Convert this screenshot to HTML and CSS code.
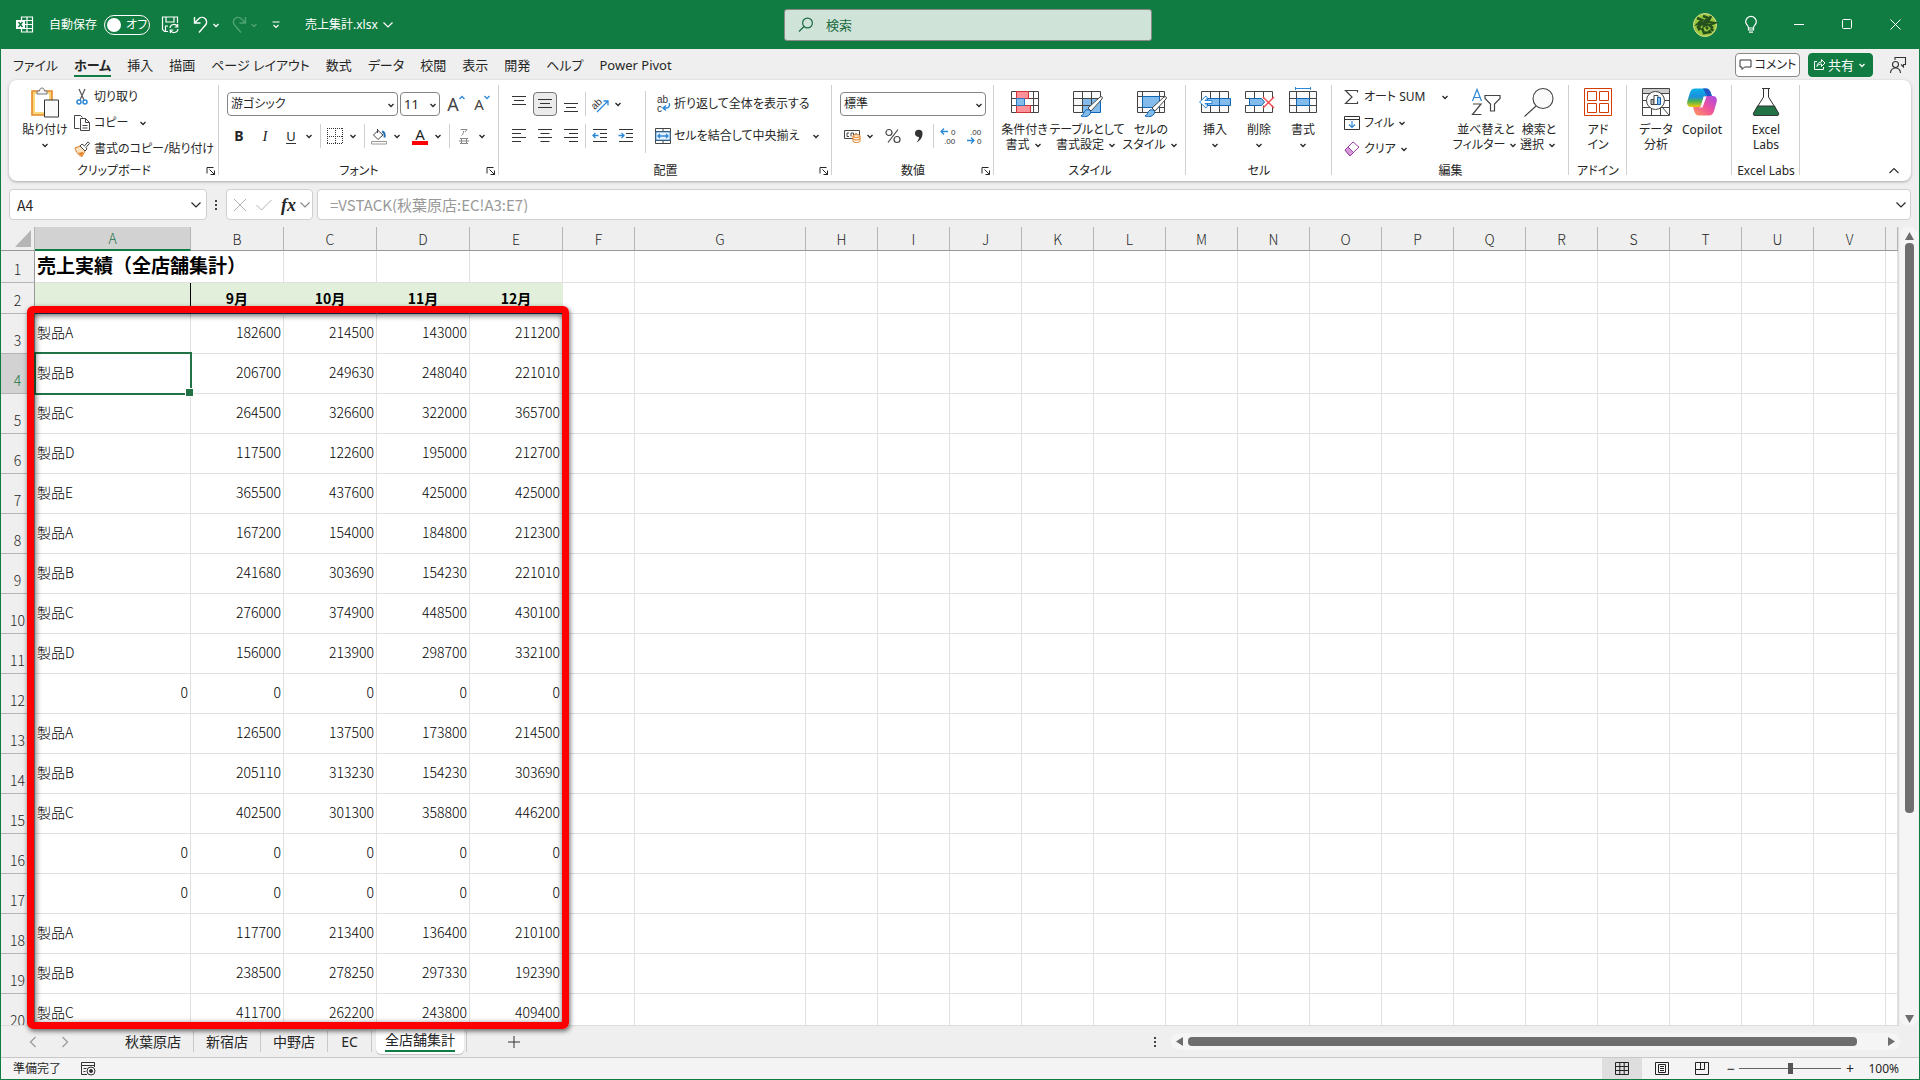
FILE: index.html
```
<!DOCTYPE html>
<html lang="ja">
<head>
    <meta charset="UTF-8">
    <meta name="viewport" content="width=device-width, initial-scale=1.0">
    <title>売上集計.xlsx</title>
    <link rel="stylesheet" href="styles.css">
</head>
<body>
    <svg class="defs" aria-hidden="true">
        <symbol id="chev" viewBox="0 0 12 12"><path d="M3.5 5l2.5 2.5L8.5 5" fill="none" stroke="currentColor" stroke-width="1.3"/></symbol>
        <symbol id="chev-big" viewBox="0 0 12 12"><path d="M1.5 3.5L6 8l4.5-4.5" fill="none" stroke="currentColor" stroke-width="1.2"/></symbol>
        <symbol id="launcher" viewBox="0 0 10 10"><path d="M1 7.5V1.5h6.5M3.5 3.5l5 5M8.5 4.5v4h-4" fill="none" stroke="currentColor"/></symbol>
    </svg>

    <header class="titlebar">
        <div class="title-left">
            <svg class="logo" width="17" height="17" viewBox="0 0 17 17"><path d="M5.5 1h11v15h-11zM5.5 4.5h11M5.5 8.5h11M5.5 12.5h11M11 1v15" fill="none" stroke="#fff" stroke-width="1.2"/><path d="M0 4h9v9H0z" fill="#fff"/><path d="M2.5 6l4 5M6.5 6l-4 5" stroke="#107c41" stroke-width="1.4"/></svg>
            <label class="autosave-label" for="autosave">自動保存</label>
            <span class="switch"><input type="checkbox" id="autosave"><span class="switch-text">オフ</span></span>
            <button class="tbtn save" aria-label="保存"><svg width="17" height="17" viewBox="0 0 17 17" fill="none" stroke="#fff" stroke-width="1.2"><path d="M6 15.5H2.5l-2-2V1h15v6M4 1v5h8V1M3.5 15v-5H6"/><path d="M8 12a4 4 0 0 1 7.5-1.5M15.7 8v3h-3M16 13a4 4 0 0 1-7.5 1.5M8.3 17v-3h3"/></svg></button>
            <button class="tbtn" aria-label="元に戻す"><svg width="16" height="18" viewBox="0 0 16 18" fill="none" stroke="#fff" stroke-width="1.4"><path d="M1.5 1v6h6M1.5 7l4-4a4.5 4.5 0 0 1 7 6L6 16.5"/></svg></button>
            <svg class="chev white"><use href="#chev"/></svg>
            <button class="tbtn redo" aria-label="やり直し"><svg width="16" height="18" viewBox="0 0 16 18" fill="none" stroke="#4fa274" stroke-width="1.4"><path d="M14.5 1v6h-6M14.5 7l-4-4a4.5 4.5 0 0 0-7 6L10 16.5"/></svg></button>
            <svg class="chev dim"><use href="#chev"/></svg>
            <button class="tbtn custom" aria-label="カスタマイズ"><svg width="10" height="10" viewBox="0 0 10 10" fill="none" stroke="#fff" stroke-width="1.2"><path d="M1.5 2h7M2.5 5L5 7.5 7.5 5"/></svg></button>
            <button class="filename">売上集計.xlsx<svg class="chev-big"><use href="#chev-big"/></svg></button>
        </div>
        <div class="search">
            <svg width="16" height="16" viewBox="0 0 16 16" fill="none" stroke="#1c6b41" stroke-width="1.2"><circle cx="9.5" cy="6" r="4.9"/><path d="M6 9.5l-5 5"/></svg>
            <input type="text" placeholder="検索" aria-label="検索">
        </div>
        <div class="title-right">
            <svg width="24" height="24" viewBox="0 0 24 24"><circle cx="12" cy="12" r="11.5" fill="#9bc93d"/><circle cx="12" cy="12" r="11.5" fill="none" stroke="#d9dc8e"/><path d="M4 5l5 2-4 4 5-1-6 5M10 3l5 2-4 4 4-1M18 3l-3 6 6 1-5 2 4 3M12 8l-1 5 4-2M5 17l3-2M9 15l2 5 6-1-1-2M13 14l2 2M18 15l2 3" fill="none" stroke="#24501d" stroke-width="2.6"/></svg>
            <button class="winbtn" aria-label="ヒント"><svg width="12" height="17" viewBox="0 0 12 17" fill="none" stroke="#fff" stroke-width="1.2"><path d="M3.5 12c0-2.5-2.8-3.2-2.8-6.3a5.3 5.3 0 0 1 10.6 0c0 3.1-2.8 3.8-2.8 6.3zM3.5 12v2h5v-2M4 16.2h4"/></svg></button>
            <button class="winbtn" aria-label="最小化"><svg width="11" height="11" viewBox="0 0 11 11"><path d="M0 5.5h10" stroke="#fff"/></svg></button>
            <button class="winbtn" aria-label="最大化"><svg width="11" height="11" viewBox="0 0 11 11"><rect x=".5" y=".5" width="9" height="9" rx="1" fill="none" stroke="#fff"/></svg></button>
            <button class="winbtn" aria-label="閉じる"><svg width="11" height="11" viewBox="0 0 11 11"><path d="M.5.5l10 10M10.5.5l-10 10" stroke="#fff"/></svg></button>
        </div>
    </header>

    <nav class="tabs">
        <button class="tab">ファイル</button>
        <button class="tab active">ホーム</button>
        <button class="tab">挿入</button>
        <button class="tab">描画</button>
        <button class="tab">ページ レイアウト</button>
        <button class="tab">数式</button>
        <button class="tab">データ</button>
        <button class="tab">校閲</button>
        <button class="tab">表示</button>
        <button class="tab">開発</button>
        <button class="tab">ヘルプ</button>
        <button class="tab">Power Pivot</button>
        <div class="tabs-right">
            <button class="comment"><svg width="13" height="12" viewBox="0 0 13 12" fill="none" stroke="#333"><path d="M1 1h11v7H5.5L3 10.5V8H1z"/></svg>コメント</button>
            <button class="share"><svg width="13" height="13" viewBox="0 0 13 13" fill="none" stroke="#fff"><path d="M4 3.5H1.500v8h9V9M4 8.5c0-3 2-4.5 4.5-4.5V1.500L12 5 8.5 8.5V6C6.500 6 5 6.500 4 8.500z"/></svg>共有<svg class="chev"><use href="#chev"/></svg></button>
            <button class="person" aria-label="発表者"><svg width="18" height="18" viewBox="0 0 18 18" fill="none" stroke="#333" stroke-width="1.1"><circle cx="6.5" cy="8.5" r="3"/><path d="M1.5 17c0-3 2-5 5-5s5 2 5 5M6 4V1.500h10.500v7h-2V11L12 8.500"/></svg></button>
        </div>
    </nav>

    <section class="ribbon">
        <div class="group clipboard">
            <div class="group-body">
                <button class="big paste">
                    <svg width="28" height="30" viewBox="0 0 28 30"><path d="M1 4h20v24H1z" fill="#f9d67c" stroke="#e8892b" stroke-width="1.6"/><path d="M4 7h14v18H4z" fill="#fff"/><path d="M6 7V4h2.500c0-4 5-4 5 0H16v3z" fill="#f5f5f5" stroke="#777"/><path d="M13.500 13h14v17h-14z" fill="#fafafa" stroke="#333"/></svg>
                    <span>貼り付け</span><svg class="chev"><use href="#chev"/></svg>
                </button>
                <div class="stack">
                    <button class="row-btn"><svg width="16" height="16" viewBox="0 0 16 16" fill="none" stroke-width="1.2"><path d="M5 0l5 11M11 0L6 11" stroke="#555"/><g stroke="#2b88d8" stroke-width="1.5"><circle cx="5" cy="13" r="2"/><circle cx="11" cy="13" r="2"/></g></svg>切り取り</button>
                    <button class="row-btn"><svg width="16" height="16" viewBox="0 0 16 16" fill="none" stroke="#444"><path d="M5.500 13.500h-5V.5h6l2 2M6.500 3.500h5l4 4v8h-9zM11.500 3.500v4h4M8.500 10.500h5M8.500 13h5"/></svg>コピー<svg class="chev far"><use href="#chev"/></svg></button>
                    <button class="row-btn"><svg width="16" height="16" viewBox="0 0 16 16"><path d="M1 7l5-2 5 5-3 5.500C5 15 2 11 1 7z" fill="#fbe0c0" stroke="#e07a1c"/><path d="M4 12l5-1-1 4z" fill="#e07a1c"/><path d="M6 5l2-2 2.500 2L14 .8l1.500 1.500L12 6.500l1 1.500-2 2z" fill="#fff" stroke="#444"/></svg>書式のコピー/貼り付け</button>
                </div>
            </div>
            <div class="group-label">クリップボード<button class="launch" aria-label="クリップボード"><svg><use href="#launcher"/></svg></button></div>
        </div>

        <div class="group font">
            <div class="group-body rows">
                <div class="line">
                    <span class="combo font-name"><select aria-label="フォント"><option>游ゴシック</option></select><svg class="chev"><use href="#chev"/></svg></span>
                    <span class="combo font-size"><select aria-label="フォント サイズ"><option>11</option></select><svg class="chev"><use href="#chev"/></svg></span>
                    <button class="tool grow" aria-label="フォント サイズの拡大"><span class="letter">A</span><svg width="6" height="10" viewBox="0 0 6 10"><path d="M.5 4L3 1.500 5.500 4" fill="none" stroke="#2b88d8" stroke-width="1.3"/></svg></button>
                    <button class="tool shrink" aria-label="フォント サイズの縮小"><span class="letter small">A</span><svg width="6" height="10" viewBox="0 0 6 10"><path d="M.5 1L3 3.500 5.500 1" fill="none" stroke="#2b88d8" stroke-width="1.3"/></svg></button>
                </div>
                <div class="line">
                    <button class="tool bold">B</button>
                    <button class="tool italic">I</button>
                    <button class="split"><span class="underline">U</span><svg class="chev"><use href="#chev"/></svg></button>
                    <span class="sep"></span>
                    <button class="split" aria-label="罫線"><svg width="16" height="16" viewBox="0 0 16 16"><path d="M.5 0v16M15.500 0v16M0 .5h16M0 15.500h16M8.500 0v16M0 8.500h16" stroke="#333" stroke-dasharray="1 1"/></svg><svg class="chev"><use href="#chev"/></svg></button>
                    <span class="sep"></span>
                    <button class="split" aria-label="塗りつぶし"><svg width="16" height="17" viewBox="0 0 16 17"><path d="M7 2.500L12 7l-5 4.500L2.500 7zM6.500 1v4" fill="#fff" stroke="#444"/><path d="M11 3.500c2.500.5 3 3 2.500 6" fill="none" stroke="#1f6fb8" stroke-width="2"/><path d="M.5 13.500h15v2.500H.5z" fill="#fff" stroke="#999"/></svg><svg class="chev"><use href="#chev"/></svg></button>
                    <button class="split" aria-label="フォントの色"><span class="font-color">A</span><svg class="chev"><use href="#chev"/></svg></button>
                    <span class="sep"></span>
                    <button class="split" aria-label="ふりがな"><svg width="10" height="17" viewBox="0 0 10 17" fill="none" stroke="#888"><path d="M1.500 1.500h6.500L6 4M4.500 3C4.500 5.500 4 6.500 2.500 7.500M1 10.500h8M0 13h10M1 15.500h8M2.500 10v6M7.500 10v6"/></svg><svg class="chev"><use href="#chev"/></svg></button>
                </div>
            </div>
            <div class="group-label">フォント<button class="launch" aria-label="フォント"><svg><use href="#launcher"/></svg></button></div>
        </div>

        <div class="group align">
            <div class="group-body">
                <div class="rows align-tools">
                    <div class="line">
                        <button class="tool" aria-label="上揃え"><svg width="16" height="16" viewBox="0 0 16 16"><path d="M1 .5h14M3 4.500h10M1 8.500h14" stroke="#333"/></svg></button>
                        <button class="tool pressed" aria-label="上下中央揃え"><svg width="16" height="16" viewBox="0 0 16 16"><path d="M1 3.500h14M3 7.500h10M1 11.500h14" stroke="#333"/></svg></button>
                        <button class="tool" aria-label="下揃え"><svg width="16" height="16" viewBox="0 0 16 16"><path d="M1 7.500h14M3 11.500h10M1 15.500h14" stroke="#333"/></svg></button>
                        <span class="sep"></span>
                        <button class="split" aria-label="方向"><svg width="17" height="17" viewBox="0 0 17 17"><text x="-1" y="9" transform="rotate(-45 7 7)" class="ab">ab</text><path d="M5 16L15.500 5.500M11.500 5h4.500v4.500" fill="none" stroke="#2b88d8" stroke-width="1.3"/></svg><svg class="chev"><use href="#chev"/></svg></button>
                    </div>
                    <div class="line">
                        <button class="tool" aria-label="左揃え"><svg width="16" height="16" viewBox="0 0 16 16"><path d="M1 1.500h14M1 5.500h9M1 9.500h14M1 13.500h9" stroke="#333"/></svg></button>
                        <button class="tool" aria-label="中央揃え"><svg width="16" height="16" viewBox="0 0 16 16"><path d="M1 1.500h14M3.500 5.500h9M1 9.500h14M3.500 13.500h9" stroke="#333"/></svg></button>
                        <button class="tool" aria-label="右揃え"><svg width="16" height="16" viewBox="0 0 16 16"><path d="M1 1.500h14M6 5.500h9M1 9.500h14M6 13.500h9" stroke="#333"/></svg></button>
                        <span class="sep"></span>
                        <button class="tool" aria-label="インデントを減らす"><svg width="16" height="16" viewBox="0 0 16 16" fill="none"><path d="M1 1.500h14M8 5.500h7M8 9.500h7M1 13.500h14" stroke="#333"/><path d="M1 7.500h5.500M3.500 5L1 7.500 3.500 10" stroke="#2b88d8" stroke-width="1.3"/></svg></button>
                        <button class="tool" aria-label="インデントを増やす"><svg width="16" height="16" viewBox="0 0 16 16" fill="none"><path d="M1 1.500h14M8 5.500h7M8 9.500h7M1 13.500h14" stroke="#333"/><path d="M.5 7.500H6M3.500 5L6 7.500 3.500 10" stroke="#2b88d8" stroke-width="1.3"/></svg></button>
                    </div>
                </div>
                <div class="rows wrap-tools">
                    <div class="line"><button class="row-btn"><svg width="16" height="18" viewBox="0 0 16 18"><text x="2" y="8" class="ab">ab</text><text x="2" y="17" class="ab">c</text><path d="M14 8c1.500 2.500 0 5-3 5H8.500M11 10.500L8 13l3 2.500" fill="none" stroke="#2b88d8" stroke-width="1.4"/></svg>折り返して全体を表示する</button></div>
                    <div class="line"><button class="row-btn merge"><svg width="16" height="16" viewBox="0 0 16 16" fill="none"><path d="M.5.5h15v15H.5zM.5 3.500h15M.5 12.500h15M8 .5v3M8 12.500v3" stroke="#444"/><path d="M1 4h14v8H1z" fill="#eaf3fb" stroke="#2b88d8" stroke-width=".8"/><path d="M3 8h10M5 6L3 8l2 2M11 6l2 2-2 2" stroke="#2b88d8" stroke-width="1.3"/></svg>セルを結合して中央揃え<svg class="chev"><use href="#chev"/></svg></button></div>
                </div>
            </div>
            <div class="group-label">配置<button class="launch" aria-label="配置"><svg><use href="#launcher"/></svg></button></div>
        </div>

        <div class="group number">
            <div class="group-body rows">
                <div class="line">
                    <span class="combo format"><select aria-label="表示形式"><option>標準</option></select><svg class="chev"><use href="#chev"/></svg></span>
                </div>
                <div class="line">
                    <button class="split" aria-label="通貨"><svg width="17" height="14" viewBox="0 0 17 14" fill="none"><path d="M.5 1.500h15v8H.5z" stroke="#444"/><path d="M5 4H3v3.500h2M7 7.500V4h2.500v3.500M12 4v2" stroke="#444"/><path d="M9 7v5c0 2 7 2 7 0V7z" fill="#fff" stroke="#e07a1c"/><path d="M9 7c0 2 7 2 7 0s-7-2-7 0zM9 9.500c0 2 7 2 7 0" fill="#fbe0c0" stroke="#e07a1c"/></svg><svg class="chev"><use href="#chev"/></svg></button>
                    <button class="tool" aria-label="パーセント"><svg width="16" height="16" viewBox="0 0 16 16" fill="none" stroke="#444" stroke-width="1.2"><circle cx="4" cy="4.5" r="3"/><circle cx="12" cy="11.5" r="3"/><path d="M13 1.500L3 14.500"/></svg></button>
                    <button class="tool" aria-label="桁区切り"><svg width="8" height="13" viewBox="0 0 8 13"><path d="M0 3.500a3.500 3.500 0 0 1 7.500 0c0 4-2.500 7.500-6 9 1.500-2 2.500-3.500 2.500-5.500C1.500 7 0 5.500 0 3.500z" fill="#333"/></svg></button>
                    <span class="sep"></span>
                    <button class="tool" aria-label="小数点以下を増やす"><svg width="17" height="18" viewBox="0 0 17 18"><text x="11" y="8" class="digits">0</text><text x="4" y="17" class="digits">.00</text><path d="M1 4.500h7M4 1.500l-3 3 3 3" fill="none" stroke="#2b88d8" stroke-width="1.3"/></svg></button>
                    <button class="tool" aria-label="小数点以下を減らす"><svg width="17" height="18" viewBox="0 0 17 18"><text x="4" y="8" class="digits">.00</text><text x="11" y="17" class="digits">0</text><path d="M1 13.500h7M5 10.500l3 3-3 3" fill="none" stroke="#2b88d8" stroke-width="1.3"/></svg></button>
                </div>
            </div>
            <div class="group-label">数値<button class="launch" aria-label="数値"><svg><use href="#launcher"/></svg></button></div>
        </div>

        <div class="group styles">
            <div class="group-body">
                <button class="big w53"><svg width="30" height="30" viewBox="0 0 30 30" fill="none"><path d="M1.500 4.500h27v21h-27zM1.500 11.500h27M1.500 18.500h27M6.500 4.500v21M23.500 4.500v21" stroke="#444"/><path d="M6.500 4.500h12v7h-12zM6.500 18.500h14v7h-14z" fill="#ff9298" stroke="#d13438"/><path d="M6.500 11.500h8v7h-8z" fill="#83bcea" stroke="#2b78c0"/></svg><span>条件付き<br>書式<svg class="chev"><use href="#chev"/></svg></span></button>
                <button class="big w72"><svg width="30" height="30" viewBox="0 0 30 30" fill="none"><path d="M1.500 4.500h27v21h-27z" fill="#fafafa"/><path d="M10.500 11.500h18v14h-18z" fill="#83bcea" stroke="#0f64b4"/><path d="M1.500 25.500v-21h27v7M1.500 25.500h9M1.500 11.500h27M1.500 18.500h18M10.500 4.500v21M19.500 4.500v14" stroke="#444"/><path d="M16 21L28 10c2-1 3 0 2 2L19 24z" fill="#fff" stroke="#444"/><path d="M9 29c3-1 2-4 5-6 3-1 6 1 4 4-2 3-6 3-9 2z" fill="#83bcea" stroke="#0f64b4"/></svg><span>テーブルとして<br>書式設定<svg class="chev"><use href="#chev"/></svg></span></button>
                <button class="big w56"><svg width="30" height="30" viewBox="0 0 30 30" fill="none"><path d="M1.500 4.500h27v21h-27zM6.500 4.500v21M23.500 4.500v21M1.500 9.500h27M1.500 20.500h27" fill="#fafafa" stroke="#444"/><path d="M6.500 9.500h17v11h-17z" fill="#83bcea" stroke="#0f64b4"/><path d="M16 21L28 10c2-1 3 0 2 2L19 24z" fill="#fff" stroke="#444"/><path d="M9 29c3-1 2-4 5-6 3-1 6 1 4 4-2 3-6 3-9 2z" fill="#83bcea" stroke="#0f64b4"/></svg><span>セルの<br>スタイル<svg class="chev"><use href="#chev"/></svg></span></button>
            </div>
            <div class="group-label">スタイル</div>
        </div>

        <div class="group cells">
            <div class="group-body">
                <button class="big w44"><svg width="34" height="30" viewBox="0 0 34 30" fill="none"><path d="M3.500 4.500h27v21h-27zM12.500 4.500v21M21.500 4.500v21" fill="#fafafa" stroke="#444"/><path d="M9.500 11.500h23v7h-23zM21.500 11.500v7" fill="#83bcea" stroke="#0f64b4"/><path d="M14 13.500H7L9.500 11 8 9l-6.500 6L8 21l1.500-2L7 16.500h7z" fill="#fff" stroke="#2b88d8"/></svg><span>挿入</span><svg class="chev"><use href="#chev"/></svg></button>
                <button class="big w44"><svg width="30" height="30" viewBox="0 0 30 30" fill="none"><path d="M1.500 11.500v-7h27v7M1.500 18.500v7h27v-7M10.500 4.500v7M19.500 4.500v7M10.500 18.500v7M19.500 18.500v7M1.500 11.500h5M1.500 18.500h5" stroke="#444"/><path d="M5.500 11.500h12l3 3.500-3 3.500h-12z" fill="#83bcea" stroke="#0f64b4"/><path d="M19 10l11 11M30 10L19 21" stroke="#f04a50" stroke-width="1.4"/></svg><span>削除</span><svg class="chev"><use href="#chev"/></svg></button>
                <button class="big w44"><svg width="30" height="30" viewBox="0 0 30 30" fill="none"><path d="M1.500 4.500h27v21h-27zM1.500 11.500h27M1.500 18.500h27M8.500 4.500v21M21.500 4.500v21" fill="#fafafa" stroke="#444"/><path d="M8.500 11.500h13v7h-13z" fill="#83bcea" stroke="#0f64b4"/><path d="M7.500 0v3M22.500 0v3M7.500 1.500h15" stroke="#2b88d8"/></svg><span>書式</span><svg class="chev"><use href="#chev"/></svg></button>
            </div>
            <div class="group-label">セル</div>
        </div>

        <div class="group edit">
            <div class="group-body">
                <div class="stack">
                    <button class="row-btn autosum"><svg width="16" height="16" viewBox="0 0 16 16"><path d="M13.500 3.500V1.500h-12L8 8l-6.500 6.500h12v-2" fill="none" stroke="#444" stroke-width="1.2"/></svg>オート SUM<svg class="chev"><use href="#chev"/></svg></button>
                    <button class="row-btn"><svg width="16" height="16" viewBox="0 0 16 16" fill="none"><path d="M.5 1.500h15v13H.5zM.5 4.500h15" stroke="#333"/><path d="M8 6v6.500M5 9.500l3 3 3-3" stroke="#2b88d8" stroke-width="1.2"/></svg>フィル<svg class="chev"><use href="#chev"/></svg></button>
                    <button class="row-btn"><svg width="16" height="16" viewBox="0 0 16 16"><path d="M1 9l8-8 6 5-9 9z" fill="#fff" stroke="#9b3fa5"/><path d="M1 9l3-3 5.500 5.500L6 15z" fill="#d49ada" stroke="#9b3fa5"/></svg>クリア<svg class="chev"><use href="#chev"/></svg></button>
                </div>
                <button class="big w56"><svg width="30" height="30" viewBox="0 0 30 30" fill="none" stroke-width="1.2"><path d="M1.500 14L6 2.500 10.500 14M3 10.500h6" stroke="#2b88d8"/><path d="M2 17h8L1.500 27.500h9M14 8.500h15v3L23.500 17v7h-4v-7L14 11.500z" stroke="#444"/></svg><span>並べ替えと<br>フィルター<svg class="chev"><use href="#chev"/></svg></span></button>
                <button class="big w50"><svg width="30" height="30" viewBox="0 0 30 30" fill="#fafafa" stroke="#444" stroke-width="1.1"><circle cx="19" cy="11.5" r="10"/><path d="M12 19L.5 29.500"/></svg><span>検索と<br>選択<svg class="chev"><use href="#chev"/></svg></span></button>
            </div>
            <div class="group-label">編集</div>
        </div>

        <div class="group addin">
            <div class="group-body">
                <button class="big w56"><svg width="30" height="30" viewBox="0 0 30 30" fill="none" stroke="#d83b01"><path d="M1.500 1.500h27v27h-27z"/><path d="M4.500 4.500h9v9h-9zM16.500 4.500h9v9h-9zM4.500 16.500h9v9h-9zM16.500 16.500h9v9h-9z"/></svg><span>アド<br>イン</span></button>
            </div>
            <div class="group-label">アドイン</div>
        </div>

        <div class="group data">
            <div class="group-body">
                <button class="big w46"><svg width="30" height="30" viewBox="0 0 30 30" fill="none" stroke="#444"><path d="M1.500 1.500h27v27h-27z"/><path d="M2 2h26v4H2z" fill="#ccc" stroke="none"/><path d="M1.500 6.500h27M1.500 13.500h27M1.500 20.500h27M10.500 20v8M19.500 20v8"/><circle cx="14.5" cy="13.5" r="9" fill="#fafafa"/><path d="M21 20l7 8"/><path d="M10 12.500h3v5h-3z" fill="#bbb"/><path d="M13 8.500h4v9h-4z" fill="#fff"/><path d="M16.500 10.500h3v7h-3z" fill="#83bcea" stroke="#0f64b4"/></svg><span>データ<br>分析</span></button>
                <button class="big w46"><svg width="30" height="30" viewBox="0 0 30 30"><defs>
                    <linearGradient id="cp1" x1="0" y1="0" x2="0" y2="1"><stop offset="0" stop-color="#0fb0e8"/><stop offset=".45" stop-color="#1a8fe0"/><stop offset=".7" stop-color="#52b44b"/><stop offset="1" stop-color="#f2c80f"/></linearGradient>
                    <linearGradient id="cp2" x1="1" y1="0" x2="0" y2="1"><stop offset="0" stop-color="#a94be8"/><stop offset=".5" stop-color="#f0529c"/><stop offset="1" stop-color="#ff9a5a"/></linearGradient></defs>
                    <path d="M8 1.500h11c3 0 4 2 5 5l.8 2.500H20c-2 0-3 1-3.500 2.500L13 20H4c-3.500 0-4.500-3-3.500-6.500l2.500-8C4 3 5.500 1.500 8 1.500z" fill="url(#cp1)"/>
                    <path d="M16 1.500h3c3 0 4 2 5 5l.8 2.500H20z" fill="#2554c7"/>
                    <path d="M22 28.500H12c-3 0-4-2-5-5L6 20h5c2 0 3-1 3.500-2.500L17.500 9H26c3.500 0 4.500 3 3.500 6.500L27 24c-1 3-2.500 4.500-5 4.500z" fill="url(#cp2)"/>
                    <path d="M16.500 9.500h3l-4 11h-4c2 0 2.500-1 3-2.500z" fill="#fff"/></svg><span>Copilot</span></button>
            </div>
            <div class="group-label"></div>
        </div>

        <div class="group labs">
            <div class="group-body">
                <button class="big w56"><svg width="30" height="30" viewBox="0 0 30 30" fill="none"><path d="M6 19h18l3.500 7c.5 2 0 2.500-1.500 2.500H4c-1.500 0-2-1-1.500-2.500z" fill="#217346"/><path d="M11 1.500h8M12.500 1.500V10L2.500 26c-.5 2 0 2.500 1.500 2.500h22c1.500 0 2-.5 1.500-2.500L17.500 10V1.500M6.500 19h17" stroke="#333"/></svg><span>Excel<br>Labs</span></button>
            </div>
            <div class="group-label">Excel Labs</div>
        </div>
        <button class="collapse" aria-label="リボンを折りたたむ"><svg width="12" height="12" viewBox="0 0 12 12"><path d="M1.500 8L6 3.500 10.500 8" fill="none" stroke="#333" stroke-width="1.2"/></svg></button>
    </section>

    <div class="formula-bar">
        <div class="box name-box"><input type="text" value="A4" aria-label="名前ボックス"><svg class="chev-big"><use href="#chev-big"/></svg></div>
        <svg class="dots" width="3" height="12" viewBox="0 0 3 12"><path d="M0 1h2v2H0zM0 5h2v2H0zM0 9h2v2H0z" fill="#444"/></svg>
        <div class="box fx">
            <svg width="14" height="14" viewBox="0 0 14 14"><path d="M1 1l12 12M13 1L1 13" stroke="#b0b0b0"/></svg>
            <svg width="16" height="12" viewBox="0 0 16 12"><path d="M.5 6l5 5 10-10" fill="none" stroke="#b0b0b0"/></svg>
            <button class="fx-btn">fx</button>
            <svg class="chev-big gray"><use href="#chev-big"/></svg>
        </div>
        <div class="box formula"><input type="text" value="=VSTACK(秋葉原店:EC!A3:E7)" aria-label="数式バー"><svg class="chev-big"><use href="#chev-big"/></svg></div>
    </div>

    <main class="sheet-area">
        <div class="sheet">
            <table>
                <colgroup id="cols"></colgroup>
                <thead><tr id="letters"></tr></thead>
                <tbody id="rows"></tbody>
            </table>
        </div>
        <div class="vscroll">
            <svg width="9" height="8" viewBox="0 0 9 8"><path d="M4.500 0L9 8H0z" fill="#6e6e6e"/></svg>
            <div class="vthumb"></div>
            <svg width="9" height="8" viewBox="0 0 9 8"><path d="M0 0h9L4.500 8z" fill="#6e6e6e"/></svg>
        </div>
        <div class="highlight"></div>
    </main>

    <div class="sheet-bar">
        <button class="nav-arrow" aria-label="前"><svg width="8" height="12" viewBox="0 0 8 12"><path d="M6.500 1l-5 5 5 5" fill="none" stroke="#999" stroke-width="1.2"/></svg></button>
        <button class="nav-arrow" aria-label="次"><svg width="8" height="12" viewBox="0 0 8 12"><path d="M1.500 1l5 5-5 5" fill="none" stroke="#999" stroke-width="1.2"/></svg></button>
        <div class="sheet-tabs">
            <button class="sheet-tab wide">秋葉原店</button>
            <button class="sheet-tab">新宿店</button>
            <button class="sheet-tab">中野店</button>
            <button class="sheet-tab short">EC</button>
            <button class="sheet-tab current"><span>全店舗集計</span></button>
        </div>
        <button class="add-sheet" aria-label="新しいシート"><svg width="12" height="12" viewBox="0 0 12 12"><path d="M6 0v12M0 6h12" stroke="#333"/></svg></button>
        <svg class="dots" width="3" height="12" viewBox="0 0 3 12"><path d="M0 1h2v2H0zM0 5h2v2H0zM0 9h2v2H0z" fill="#444"/></svg>
        <div class="hscroll">
            <svg width="7" height="9" viewBox="0 0 7 9"><path d="M7 0v9L0 4.500z" fill="#6e6e6e"/></svg>
            <div class="hthumb"></div>
            <svg width="7" height="9" viewBox="0 0 7 9"><path d="M0 0v9l7-4.500z" fill="#6e6e6e"/></svg>
        </div>
    </div>

    <footer class="status">
        <span>準備完了</span>
        <svg class="macro" width="15" height="14" viewBox="0 0 15 14" fill="none" stroke="#333"><path d="M6 12.500H.5V.5h13V5M.5 3.500h13M2.500 6.500h3M2.500 9.500h2"/><circle cx="10" cy="9" r="4"/><circle cx="10" cy="9" r="1.500" fill="#333"/></svg>
        <div class="view-tools">
            <button class="view on" aria-label="標準"><svg width="14" height="13" viewBox="0 0 14 13" fill="none" stroke="#222"><path d="M.5.500h13v12H.5zM.5 4.500h13M.5 8.500h13M4.800.500v12M9.200.500v12"/></svg></button>
            <button class="view" aria-label="ページ レイアウト"><svg width="14" height="13" viewBox="0 0 14 13" fill="none" stroke="#222"><path d="M.5.500h13v12H.5zM3.500 2.500h7v8h-7zM5 4.500h4M5 6.500h4M5 8.500h4"/></svg></button>
            <button class="view" aria-label="改ページ"><svg width="14" height="13" viewBox="0 0 14 13" fill="none" stroke="#222"><path d="M.5.500h13v12H.5zM.5 7.500h9v-7M5.500.500v7"/></svg></button>
            <span class="zoom-sign">−</span>
            <input class="zoom" type="range" min="10" max="190" value="100" aria-label="ズーム">
            <span class="zoom-sign">+</span>
            <button class="zoom-value">100%</button>
        </div>
    </footer>

    <script src="script.js"></script>
</body>
</html>
```

FILE: styles.css
```
*{
    box-sizing: border-box;
}
body{
    display: flex;
    flex-direction: column;
    height: 100vh;
    margin: 0;
    overflow: hidden;
    border: 1px solid #107c41;
    border-top: 0;
    background: #efefef;
    color: #262626;
    font-family: "Noto Sans", "Noto Sans CJK JP", sans-serif;
    font-size: 12px;
    line-height: 16px;
    font-feature-settings: "palt";
}
button, input, select{
    font: inherit;
    font-feature-settings: inherit;
    color: inherit;
    padding: 0;
    border: 0;
    background: none;
}
button{
    display: flex;
    align-items: center;
    justify-content: center;
    white-space: nowrap;
}
svg{
    flex: none;
    overflow: visible;
}
.defs{
    display: none;
}
.chev, .chev-big{
    width: 12px;
    height: 12px;
}

/* title bar */
.titlebar{
    display: grid;
    grid-template-columns: 1fr 368px 1fr;
    align-items: center;
    height: 49px;
    margin: 0 -1px;
    padding-left: 16px;
    background: #107c41;
    color: #fff;
}
.title-left{
    display: flex;
    align-items: center;
}
.autosave-label{
    margin: 0 7px 0 16px;
}
.switch{
    position: relative;
    width: 46px;
    height: 20px;
}
.switch input{
    display: block;
    appearance: none;
    width: 46px;
    height: 20px;
    margin: 0;
    border: 1px solid #fff;
    border-radius: 10px;
}
.switch input::before{
    content: "";
    display: block;
    width: 14px;
    height: 14px;
    margin: 2px;
    border-radius: 50%;
    background: #fff;
}
.switch-text{
    position: absolute;
    left: 22px;
    top: 2px;
}
.save{
    margin: 0 14px 0 12px;
}
.redo{
    margin-left: 9px;
}
.custom{
    margin: 0 24px 0 11px;
}
.white{
    margin-left: 1px;
}
.dim{
    margin-left: 1px;
    color: #4fa274;
}
.filename{
    gap: 4px;
}
.search{
    display: flex;
    align-items: center;
    gap: 12px;
    height: 32px;
    padding-left: 13px;
    border: 1px solid #8a8886;
    border-radius: 3px;
    background: #cfe3d8;
    color: #1c6b41;
}
.search input{
    flex: 1;
    font-size: 13px;
    outline: none;
}
.search input::placeholder{
    color: #1c6b41;
}
.title-right{
    display: flex;
    align-items: center;
    justify-content: flex-end;
    padding-right: 1px;
}
.title-right > svg{
    margin-right: 10px;
}
.winbtn{
    width: 48px;
    height: 32px;
}

/* menu tabs */
.tabs{
    display: flex;
    align-items: center;
    height: 31px;
    padding: 0 12px;
    gap: 16px;
    font-size: 13px;
}
.tab{
    height: 24px;
    padding-top: 2px;
    border-bottom: 2px solid transparent;
}
.tab.active{
    border-color: #107c41;
    font-weight: bold;
}
.tabs-right{
    display: flex;
    align-items: center;
    margin-left: auto;
    height: 24px;
}
.comment, .share{
    gap: 3px;
    width: 65px;
    height: 24px;
    margin-right: 8px;
    border: 1px solid #8a8886;
    border-radius: 4px;
    background: #fff;
    font-size: 12px;
}
.share{
    border-color: #107c41;
    background: #107c41;
    color: #fff;
    font-size: 13px;
    gap: 2px;
}
.person{
    width: 34px;
    margin-right: -8px;
}

/* ribbon */
.ribbon{
    display: flex;
    height: 101px;
    margin: 0 8px;
    padding-top: 4px;
    border-radius: 8px;
    background: #fff;
    box-shadow: 0 1px 3px rgba(0, 0, 0, 0.3);
}
.group{
    display: flex;
    flex-direction: column;
    position: relative;
    flex: none;
}
.group::after{
    content: "";
    position: absolute;
    right: 0;
    top: 1px;
    bottom: 6px;
    width: 1px;
    background: #d0d0d0;
}
.group-body{
    display: flex;
    height: 79px;
}
.group-label{
    position: relative;
    height: 18px;
    text-align: center;
}
.launch{
    position: absolute;
    right: 3px;
    top: 3px;
}
.launch svg{
    width: 10px;
    height: 10px;
}
.clipboard{
    width: 210px;
}
.font{
    width: 280px;
}
.align{
    width: 333px;
}
.number{
    width: 162px;
}
.styles{
    width: 192px;
}
.cells{
    width: 146px;
}
.edit{
    width: 237px;
}
.addin{
    width: 58px;
}
.data{
    width: 105px;
}
.labs{
    width: 68px;
}
.font .group-body, .number .group-body, .align .group-body{
    padding-left: 8px;
}
.styles .group-body{
    padding-left: 4px;
}
.cells .group-body{
    padding-left: 7px;
}
.edit .group-body{
    padding-left: 12px;
}
.addin .group-body{
    padding-left: 1px;
}
.data .group-body, .labs .group-body{
    padding-left: 6px;
}
.big{
    flex-direction: column;
    justify-content: flex-start;
    padding-top: 3px;
    line-height: 15px;
}
.big > svg:first-child{
    margin-bottom: 5px;
}
.big .chev{
    vertical-align: -2px;
    margin-left: 2px;
}
.big > .chev{
    margin-left: 0;
    margin-top: 2px;
}
.w44{
    width: 44px;
}
.w46{
    width: 46px;
}
.w50{
    width: 50px;
}
.w53{
    width: 53px;
}
.w56{
    width: 56px;
}
.w72{
    width: 72px;
}
.paste{
    width: 58px;
    margin-left: 7px;
}
.stack{
    display: flex;
    flex-direction: column;
}
.edit .stack{
    width: 107px;
    margin-right: 7px;
}
.row-btn{
    height: 26px;
    gap: 4px;
    justify-content: flex-start;
}
.row-btn .chev{
    margin-left: -2px;
}
.row-btn .far{
    margin-left: 5px;
}
.autosum .chev{
    margin-left: auto;
}
.rows{
    display: flex;
    flex-direction: column;
    gap: 8px;
    padding-top: 8px;
}
.line{
    display: flex;
    align-items: center;
    height: 24px;
}
.tool{
    width: 24px;
    height: 24px;
    margin-right: 2px;
    border-radius: 4px;
}
.pressed{
    border: 1px solid #777;
    background: #ebebeb;
}
.split{
    height: 24px;
    width: 36px;
    margin-right: 5px;
}
.split > :first-child{
    margin: 0 auto;
}
.sep{
    width: 1px;
    height: 24px;
    margin-right: 2px;
    background: #d0d0d0;
}
.combo{
    position: relative;
    height: 24px;
    border: 1px solid #868686;
    border-radius: 4px;
}
.combo select{
    appearance: none;
    width: 100%;
    height: 22px;
    padding-left: 3px;
    outline: none;
}
.combo .chev{
    position: absolute;
    right: 0;
    top: 6px;
    pointer-events: none;
}
.font-name{
    width: 171px;
    margin-right: 2px;
}
.font-size{
    width: 40px;
    margin-right: 4px;
    font-size: 13px;
}
.format{
    width: 146px;
}
.letter{
    font-size: 18px;
    color: #444;
}
.letter.small{
    font-size: 15px;
}
.grow svg, .shrink svg{
    align-self: flex-start;
    margin-top: 3px;
}
.bold{
    font-weight: bold;
    font-size: 14px;
}
.italic{
    font-family: "Liberation Serif", serif;
    font-style: italic;
    font-size: 15px;
}
.underline{
    border-bottom: 1px solid #333;
    line-height: 14px;
    font-size: 13px;
}
.font-color{
    width: 16px;
    border-bottom: 4px solid #f00;
    line-height: 13px;
    font-size: 15px;
    text-align: center;
}
.digits, .ab{
    font-family: "Liberation Sans", sans-serif;
    font-size: 8px;
    fill: #333;
}
.ab{
    font-size: 10px;
}
.align-tools{
    width: 138px;
}
.wrap-tools{
    position: relative;
    padding-left: 10px;
}
.wrap-tools::before{
    content: "";
    position: absolute;
    left: 0;
    top: 7px;
    height: 62px;
    width: 1px;
    background: #d0d0d0;
}
.wrap-tools .row-btn{
    gap: 3px;
}
.row-btn.merge .chev{
    margin-left: 8px;
}
.collapse{
    align-self: flex-end;
    margin: 0 11px 4px auto;
}

/* formula bar */
.formula-bar{
    display: flex;
    align-items: center;
    margin: 8px 8px 7px;
    height: 31px;
}
.box{
    display: flex;
    align-items: center;
    height: 31px;
    border: 1px solid #d0d0d0;
    border-radius: 4px;
    background: #fff;
}
.box input{
    flex: 1;
    min-width: 0;
    outline: none;
    font-family: "Noto Sans CJK JP", sans-serif;
    font-size: 14px;
}
.name-box{
    width: 198px;
    padding: 0 4px 0 7px;
}
.formula-bar .dots{
    margin: 0 8px;
}
.fx{
    width: 87px;
    gap: 9px;
    padding-left: 6px;
}
.fx-btn{
    font-family: "Liberation Serif", serif;
    font-style: italic;
    font-weight: bold;
    font-size: 18px;
}
.gray{
    color: #888;
    margin-left: -6px;
}
.formula{
    flex: 1;
    margin-left: 4px;
    padding: 0 3px 0 12px;
}
.formula input{
    color: #999;
    font-size: 15px;
}

/* worksheet */
.sheet-area{
    position: relative;
    display: flex;
    flex: 1;
    min-height: 0;
}
.sheet{
    flex: 1;
    min-width: 0;
    overflow: hidden;
    border-right: 1px solid #dcdcdc;
    border-bottom: 1px solid #dcdcdc;
    font-family: "Noto Sans CJK JP", sans-serif;
    font-size: 14px;
    font-feature-settings: normal;
    color: #000;
}
table{
    width: 100%;
    table-layout: fixed;
    border-collapse: separate;
    border-spacing: 0;
    background: #fff;
}
th{
    padding: 0;
    background: #efefef;
    font-weight: 300;
    color: #262626;
}
thead th{
    height: 24px;
    border-right: 1px solid #b5b5b5;
    border-bottom: 1px solid #999;
    line-height: 20px;
}
thead th.on{
    border-bottom: 2px solid #107c41;
    background: #d2d2d2;
    color: #217346;
}
.corner svg{
    display: block;
    margin-left: 14px;
}
tbody th{
    padding-bottom: 3px;
    border-right: 1px solid #999;
    border-bottom: 1px solid #b5b5b5;
    vertical-align: bottom;
    line-height: 20px;
}
tbody th.on{
    background: #d2d2d2;
    color: #217346;
}
td{
    height: 40px;
    padding: 0 2px 3px;
    border-right: 1px solid #e0e0e0;
    border-bottom: 1px solid #e0e0e0;
    font-weight: 300;
    line-height: 20px;
    white-space: nowrap;
    text-align: right;
}
.name{
    text-align: left;
}
.row-1 td{
    height: 32px;
    font-size: 19px;
    line-height: 26px;
    font-weight: bold;
}
.row-1 .name{
    border-right-color: transparent;
}
.row-2 td{
    height: 31px;
    vertical-align: bottom;
}
.row-2 .month{
    padding-bottom: 5px;
    border-right-color: #e2efda;
    border-bottom-color: #2b3c78;
    background: #e2efda;
    text-align: center;
    font-weight: bold;
}
.row-2 .month:nth-child(2){
    border-right-color: #000;
}
.selected{
    position: relative;
}
.selected::after{
    content: "";
    position: absolute;
    inset: -2px -2px -2px -1px;
    border: 2px solid #217346;
}
.selected::before{
    content: "";
    position: absolute;
    right: -4px;
    bottom: -4px;
    width: 7px;
    height: 7px;
    border: 1px solid #fff;
    background: #217346;
    z-index: 1;
}
.highlight{
    position: absolute;
    left: 26px;
    top: 79px;
    bottom: -3px;
    width: 542px;
    border: 7px solid #f00;
    border-radius: 6px;
    box-shadow: 1px 2px 5px rgba(0, 0, 0, 0.6), inset 1px 2px 6px rgba(0, 0, 0, 0.7);
    z-index: 2;
}
.vscroll{
    display: flex;
    flex-direction: column;
    align-items: center;
    width: 18px;
    margin: 0 1px;
    padding: 5px 0 3px;
    border-radius: 8px;
    background: #f5f5f5;
}
.vthumb{
    width: 9px;
    height: 72%;
    margin: 3px 0 auto;
    border-radius: 4px;
    background: #6e6e6e;
}

/* sheet tabs */
.sheet-bar{
    display: flex;
    align-items: center;
    height: 31px;
}
.nav-arrow{
    width: 32px;
}
.nav-arrow:first-child{
    margin-left: 16px;
}
.sheet-tabs{
    display: flex;
    align-items: center;
    height: 31px;
    margin-left: 32px;
    font-size: 14px;
}
.sheet-tab{
    width: 67px;
    height: 21px;
    padding-top: 1px;
    border-right: 1px solid #c8c8c8;
}
.wide{
    width: 81px;
}
.short{
    width: 44px;
}
.current{
    align-self: flex-start;
    width: 88px;
    height: 28px;
    margin-left: 4px;
    padding: 0;
    border: 0;
    border-radius: 0 0 5px 5px;
    background: #fff;
    box-shadow: 0 1px 1px rgba(0, 0, 0, 0.2);
}
.current span{
    border-bottom: 2px solid #107c41;
    line-height: 21px;
}
.add-sheet{
    margin: 0 auto 0 2px;
    padding-left: 41px;
    height: 21px;
    border-left: 1px solid #c8c8c8;
}
.sheet-bar .dots{
    margin-right: 14px;
}
.hscroll{
    display: flex;
    align-items: center;
    flex: 0 0 38%;
    height: 17px;
    margin-right: 19px;
    padding: 0 5px;
    border-radius: 8px;
    background: #f5f5f5;
}
.hthumb{
    flex: 0 0 93%;
    height: 9px;
    margin: 0 auto 0 5px;
    border-radius: 4px;
    background: #6e6e6e;
}

/* status bar */
.status{
    display: flex;
    align-items: center;
    height: 22px;
    padding-left: 12px;
    border-top: 1px solid #c8c8c8;
    background: #f4f4f4;
}
.macro{
    margin-left: 20px;
}
.view-tools{
    display: flex;
    align-items: center;
    margin-left: auto;
    padding-right: 20px;
}
.view{
    width: 40px;
    height: 21px;
}
.view.on{
    background: #dedede;
}
.zoom-sign{
    width: 17px;
    text-align: center;
    font-size: 14px;
}
.zoom{
    appearance: none;
    width: 102px;
    height: 16px;
    margin: 0;
    background: linear-gradient(#666, #666) center / 100% 1px no-repeat;
}
.zoom::-webkit-slider-thumb{
    appearance: none;
    width: 5px;
    height: 11px;
    background: #555;
}
.zoom-value{
    margin-left: 10px;
}
```

FILE: script.js
```
const letters = 'ABCDEFGHIJKLMNOPQRSTUV'.split('');
const widths = { A: 156, B: 93, C: 93, D: 93, E: 93, G: 171 };
const values = [
    ['製品A', 182600, 214500, 143000, 211200],
    ['製品B', 206700, 249630, 248040, 221010],
    ['製品C', 264500, 326600, 322000, 365700],
    ['製品D', 117500, 122600, 195000, 212700],
    ['製品E', 365500, 437600, 425000, 425000],
    ['製品A', 167200, 154000, 184800, 212300],
    ['製品B', 241680, 303690, 154230, 221010],
    ['製品C', 276000, 374900, 448500, 430100],
    ['製品D', 156000, 213900, 298700, 332100],
    [0, 0, 0, 0, 0],
    ['製品A', 126500, 137500, 173800, 214500],
    ['製品B', 205110, 313230, 154230, 303690],
    ['製品C', 402500, 301300, 358800, 446200],
    [0, 0, 0, 0, 0],
    [0, 0, 0, 0, 0],
    ['製品A', 117700, 213400, 136400, 210100],
    ['製品B', 238500, 278250, 297330, 192390],
    ['製品C', 411700, 262200, 243800, 409400]
];

//Column widths and letters
let cols = '<col style="width:34px">';
let head = '<th class="corner"><svg width="16" height="17" viewBox="0 0 16 17"><path d="M16 0v17H0z" fill="#b5b5b5"/></svg></th>';
letters.forEach(letter => {
    cols += `<col style="width:${widths[letter] || 72}px">`;
    head += `<th class="${letter === 'A' ? 'on' : ''}">${letter}</th>`;
});
document.getElementById('cols').innerHTML = cols + '<col>';
document.getElementById('letters').innerHTML = head + '<th></th>';

//Rows
function makeRow(number, cells) {
    let html = `<tr class="row-${number}"><th class="${number === 4 ? 'on' : ''}">${number}</th>`;
    for (let i = 0; i <= letters.length; i++) {
        const value = cells[i];
        let name = '';
        if (number === 2 && i < 5) name = 'month';
        else if (typeof value === 'string') name = 'name';
        if (number === 4 && i === 0) name += ' selected';
        html += `<td class="${name}">${value === undefined ? '' : value}</td>`;
    }
    return html + '</tr>';
}

let html = makeRow(1, ['売上実績（全店舗集計）']) + makeRow(2, ['', '9月', '10月', '11月', '12月']);
values.forEach((cells, i) => {
    html += makeRow(i + 3, cells);
});
document.getElementById('rows').innerHTML = html;
```
